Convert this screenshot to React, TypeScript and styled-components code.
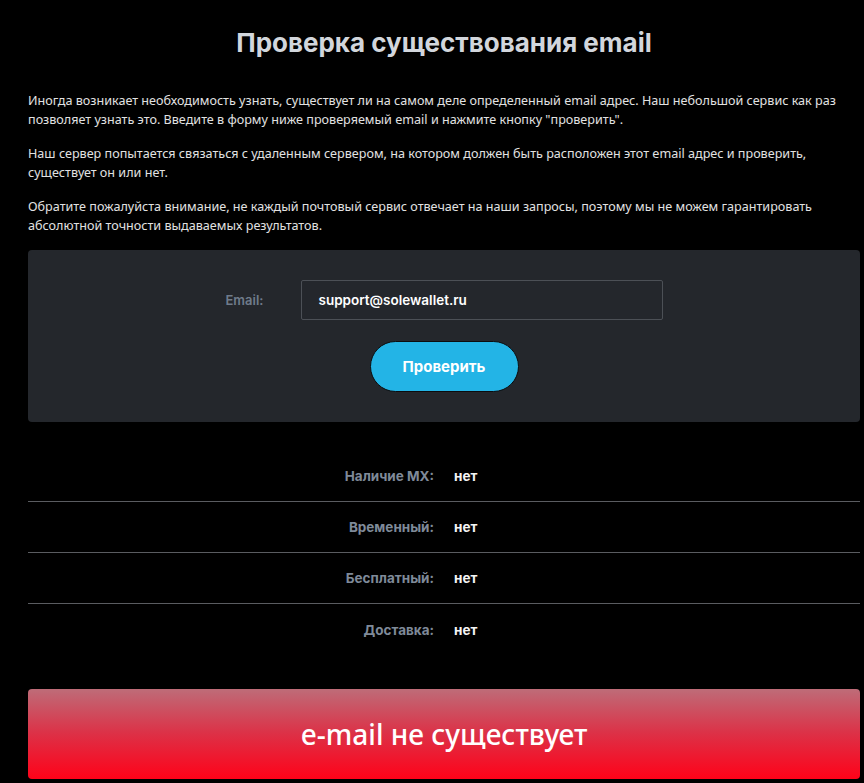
import styled, { createGlobalStyle } from 'styled-components';

const GlobalStyle = createGlobalStyle`
  html, body {
    margin: 0;
    padding: 0;
    background: #000;
  }
  body {
    font-family: 'Open Sans', 'Noto Sans', sans-serif;
  }
  * {
    box-sizing: border-box;
  }
`;

const Page = styled.div`
  width: 864px;
  min-height: 783px;
  padding: 0 4px 4px 28px;
  background: #000;
`;

const Title = styled.h1`
  margin: 0;
  padding-top: 26px;
  height: 91px;
  text-align: center;
  color: #d2d6dc;
  font-family: Inter, 'Noto Sans', sans-serif;
  font-size: 26px;
  font-weight: 700;
  line-height: 34px;
`;

const Paragraph = styled.p`
  margin: 0 0 15px;
  color: #e2e2e2;
  font-family: 'Noto Sans', 'Open Sans', sans-serif;
  font-size: 12.6px;
  line-height: 19px;
`;

const Panel = styled.div`
  margin-top: 15px;
  height: 172px;
  padding-top: 30px;
  background: #24272c;
  border-radius: 4px;
  display: flex;
  flex-direction: column;
  align-items: center;
  gap: 21px;
`;

const FormRow = styled.div`
  display: flex;
  align-items: center;
  gap: 34px;
`;

const Label = styled.label`
  color: #6f7b8b;
  font-family: Inter, 'Noto Sans', sans-serif;
  font-size: 13px;
  font-weight: 600;
  width: 41px;
`;

const Input = styled.div`
  width: 362px;
  height: 40px;
  border: 1px solid #4c5056;
  border-radius: 2px;
  padding-left: 17px;
  display: flex;
  align-items: center;
  color: #fff;
  font-family: Inter, 'Noto Sans', sans-serif;
  font-size: 13.5px;
  font-weight: 600;
`;

const Button = styled.button`
  width: 149px;
  height: 51px;
  border-radius: 26px;
  border: 1px solid #0c0d0f;
  background: #23b4e6;
  color: #fff;
  font-family: Inter, 'Noto Sans', sans-serif;
  font-size: 15px;
  font-weight: 700;
  cursor: pointer;
`;

const Results = styled.div`
  margin-top: 29px;
`;

const ResultRow = styled.div<{ $last?: boolean }>`
  display: grid;
  grid-template-columns: 1fr 1fr;
  column-gap: 20px;
  align-items: center;
  height: 51px;
  border-bottom: ${({ $last }) => ($last ? 'none' : '1px solid #5a5c60')};
  font-family: Inter, 'Noto Sans', sans-serif;
  font-size: 13.5px;
  font-weight: 700;
`;

const ResultLabel = styled.span`
  text-align: right;
  color: #7f8a99;
`;

const ResultValue = styled.span`
  color: #f4f4f4;
`;

const Verdict = styled.div`
  margin-top: 34px;
  height: 90px;
  border-radius: 4px;
  background: linear-gradient(to bottom, #be6c78 0%, #dd3046 50%, #ff0219 100%);
  display: flex;
  align-items: center;
  justify-content: center;
  color: #fff;
  font-family: 'Noto Sans', 'Open Sans', sans-serif;
  font-size: 28px;
  font-weight: 500;
`;

const results = [
  { label: 'Наличие MX:', value: 'нет' },
  { label: 'Временный:', value: 'нет' },
  { label: 'Бесплатный:', value: 'нет' },
  { label: 'Доставка:', value: 'нет' },
];

export default function App() {
  return (
    <Page>
      <GlobalStyle />
      <Title>Проверка существования email</Title>
      <Paragraph>
        Иногда возникает необходимость узнать, существует ли на самом деле определенный email адрес. Наш
        небольшой сервис как раз позволяет узнать это. Введите в форму ниже проверяемый email и нажмите
        кнопку "проверить".
      </Paragraph>
      <Paragraph>
        Наш сервер попытается связаться с удаленным сервером, на котором должен быть расположен этот email
        адрес и проверить, существует он или нет.
      </Paragraph>
      <Paragraph>
        Обратите пожалуйста внимание, не каждый почтовый сервис отвечает на наши запросы, поэтому мы не
        можем гарантировать абсолютной точности выдаваемых результатов.
      </Paragraph>
      <Panel>
        <FormRow>
          <Label>Email:</Label>
          <Input>support@solewallet.ru</Input>
        </FormRow>
        <Button>Проверить</Button>
      </Panel>
      <Results>
        {results.map((r, i) => (
          <ResultRow key={r.label} $last={i === results.length - 1}>
            <ResultLabel>{r.label}</ResultLabel>
            <ResultValue>{r.value}</ResultValue>
          </ResultRow>
        ))}
      </Results>
      <Verdict>e-mail не существует</Verdict>
    </Page>
  );
}
